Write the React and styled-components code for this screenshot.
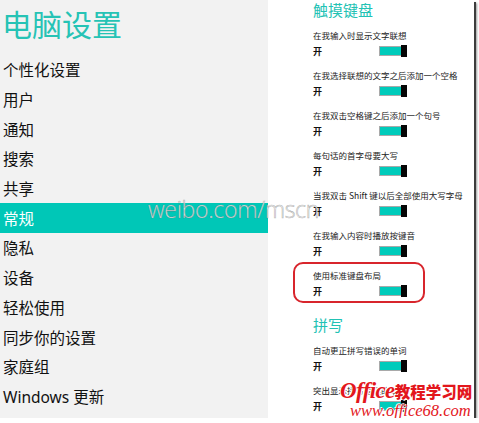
import React from "react";
import styled, { createGlobalStyle } from "styled-components";

const Global = createGlobalStyle`
  html, body { margin: 0; padding: 0; background: #ffffff; }
  body { font-family: "Noto Sans", "Noto Sans CJK SC", sans-serif; }
`;

const Window = styled.div`
  position: relative;
  width: 474px;
  height: 418px;
  display: grid;
  grid-template-columns: 268px 1fr;
  background: #ffffff;
  box-shadow: 2px 2px 0 #3c3c3c, 3px 3px 2px #9a9a9a;
`;

const LeftPane = styled.nav`
  background: #f2f2f2;
  display: flex;
  flex-direction: column;
`;

const Title = styled.h1`
  margin: 0;
  box-sizing: border-box;
  height: 55px;
  padding: 5px 0 0 2px;
  font-family: "Noto Sans CJK SC", sans-serif;
  font-weight: 400;
  font-size: 30px;
  line-height: 36px;
  color: #26c3b5;
`;

const MenuItem = styled.div`
  height: 29.7px;
  display: flex;
  align-items: center;
  padding-left: 3px;
  font-family: "Noto Sans", "Noto Sans CJK SC", sans-serif;
  font-size: 15.5px;
  color: ${(p) => (p.$active ? "#ffffff" : "#111111")};
  background: ${(p) => (p.$active ? "#00c7b7" : "transparent")};
`;

const RightPane = styled.section`
  padding: 0 0 0 45px;
  font-family: "Noto Sans CJK SC", sans-serif;
`;

const SectionTitle = styled.h2`
  margin: ${(p) => (p.$spaced ? "7px" : "0")} 0 8px 0;
  font-weight: 400;
  font-size: 15px;
  line-height: 20px;
  color: #22c2b4;
`;

const Group = styled.div`
  position: relative;
  padding-bottom: 8px;
  ${(p) =>
    p.$highlight &&
    `
    &::after {
      content: "";
      position: absolute;
      left: -20px;
      top: -6px;
      width: 132px;
      height: 41px;
      box-sizing: border-box;
      border: 2px solid #d8252c;
      border-radius: 10px;
    }
  `}
`;

const Label = styled.div`
  font-size: 8.5px;
  line-height: 14px;
  color: #222222;
  white-space: nowrap;
`;

const Row = styled.div`
  width: 94px;
  height: 18px;
  display: flex;
  align-items: center;
  justify-content: space-between;
`;

const OnText = styled.span`
  font-size: 9px;
  font-weight: 700;
  color: #111111;
`;

const Toggle = styled.span`
  display: flex;
  align-items: center;
  width: 28px;
  height: 12px;
`;

const Track = styled.span`
  box-sizing: border-box;
  width: 22px;
  height: 10px;
  border: 1px solid #a9a9a9;
  border-right: none;
  background: #00cbbb;
`;

const Thumb = styled.span`
  width: 6px;
  height: 12px;
  background: #050505;
`;

const Watermark = styled.div`
  position: absolute;
  left: 148px;
  top: 193px;
  font-family: "Open Sans", "Noto Sans", sans-serif;
  font-weight: 300;
  font-size: 23px;
  letter-spacing: -0.3px;
  color: rgba(255, 255, 255, 0.9);
  -webkit-text-stroke: 0.6px rgba(110, 110, 110, 0.55);
  pointer-events: none;
`;

const OfficeLogo = styled.div`
  position: absolute;
  left: 340px;
  top: 380px;
  color: #e3161c;
  text-shadow: 0 0 1px #fff, 0 0 1px #fff, 1px 1px 0 #fff, -1px -1px 0 #fff;
  pointer-events: none;
`;

const LogoLine = styled.div`
  display: flex;
  align-items: baseline;
  white-space: nowrap;
  line-height: ${(p) => p.$lh};
  padding-left: ${(p) => p.$indent || 0};
`;

const OfficeWord = styled.span`
  font-family: "Liberation Serif", serif;
  font-style: italic;
  font-weight: 700;
  font-size: 23px;
  letter-spacing: -0.6px;
`;

const CnWord = styled.span`
  font-family: "Noto Sans CJK SC", sans-serif;
  font-weight: 900;
  font-size: 15.5px;
`;

const UrlWord = styled.span`
  font-family: "Liberation Serif", serif;
  font-style: italic;
  font-size: 16.5px;
`;

const menu = [
  "个性化设置",
  "用户",
  "通知",
  "搜索",
  "共享",
  "常规",
  "隐私",
  "设备",
  "轻松使用",
  "同步你的设置",
  "家庭组",
  "Windows 更新",
];

const keyboard = [
  "在我输入时显示文字联想",
  "在我选择联想的文字之后添加一个空格",
  "在我双击空格键之后添加一个句号",
  "每句话的首字母要大写",
  "当我双击 Shift 键以后全部使用大写字母",
  "在我输入内容时播放按键音",
  "使用标准键盘布局",
];

const spelling = ["自动更正拼写错误的单词", "突出显示拼写错误的单词"];

function Setting({ label, highlight }) {
  return (
    <Group $highlight={highlight}>
      <Label>{label}</Label>
      <Row>
        <OnText>开</OnText>
        <Toggle>
          <Track />
          <Thumb />
        </Toggle>
      </Row>
    </Group>
  );
}

export default function App() {
  return (
    <>
      <Global />
      <Window>
        <LeftPane>
          <Title>电脑设置</Title>
          {menu.map((m) => (
            <MenuItem key={m} $active={m === "常规"}>
              {m}
            </MenuItem>
          ))}
        </LeftPane>
        <RightPane>
          <SectionTitle>触摸键盘</SectionTitle>
          {keyboard.map((k, i) => (
            <Setting key={k} label={k} highlight={i === keyboard.length - 1} />
          ))}
          <SectionTitle $spaced>拼写</SectionTitle>
          {spelling.map((s) => (
            <Setting key={s} label={s} />
          ))}
        </RightPane>
        <Watermark>weibo.com/mscn</Watermark>
        <OfficeLogo>
          <LogoLine $lh="22px">
            <OfficeWord>Office</OfficeWord>
            <CnWord>教程学习网</CnWord>
          </LogoLine>
          <LogoLine $lh="18px" $indent="10px">
            <UrlWord>www.office68.com</UrlWord>
          </LogoLine>
        </OfficeLogo>
      </Window>
    </>
  );
}
